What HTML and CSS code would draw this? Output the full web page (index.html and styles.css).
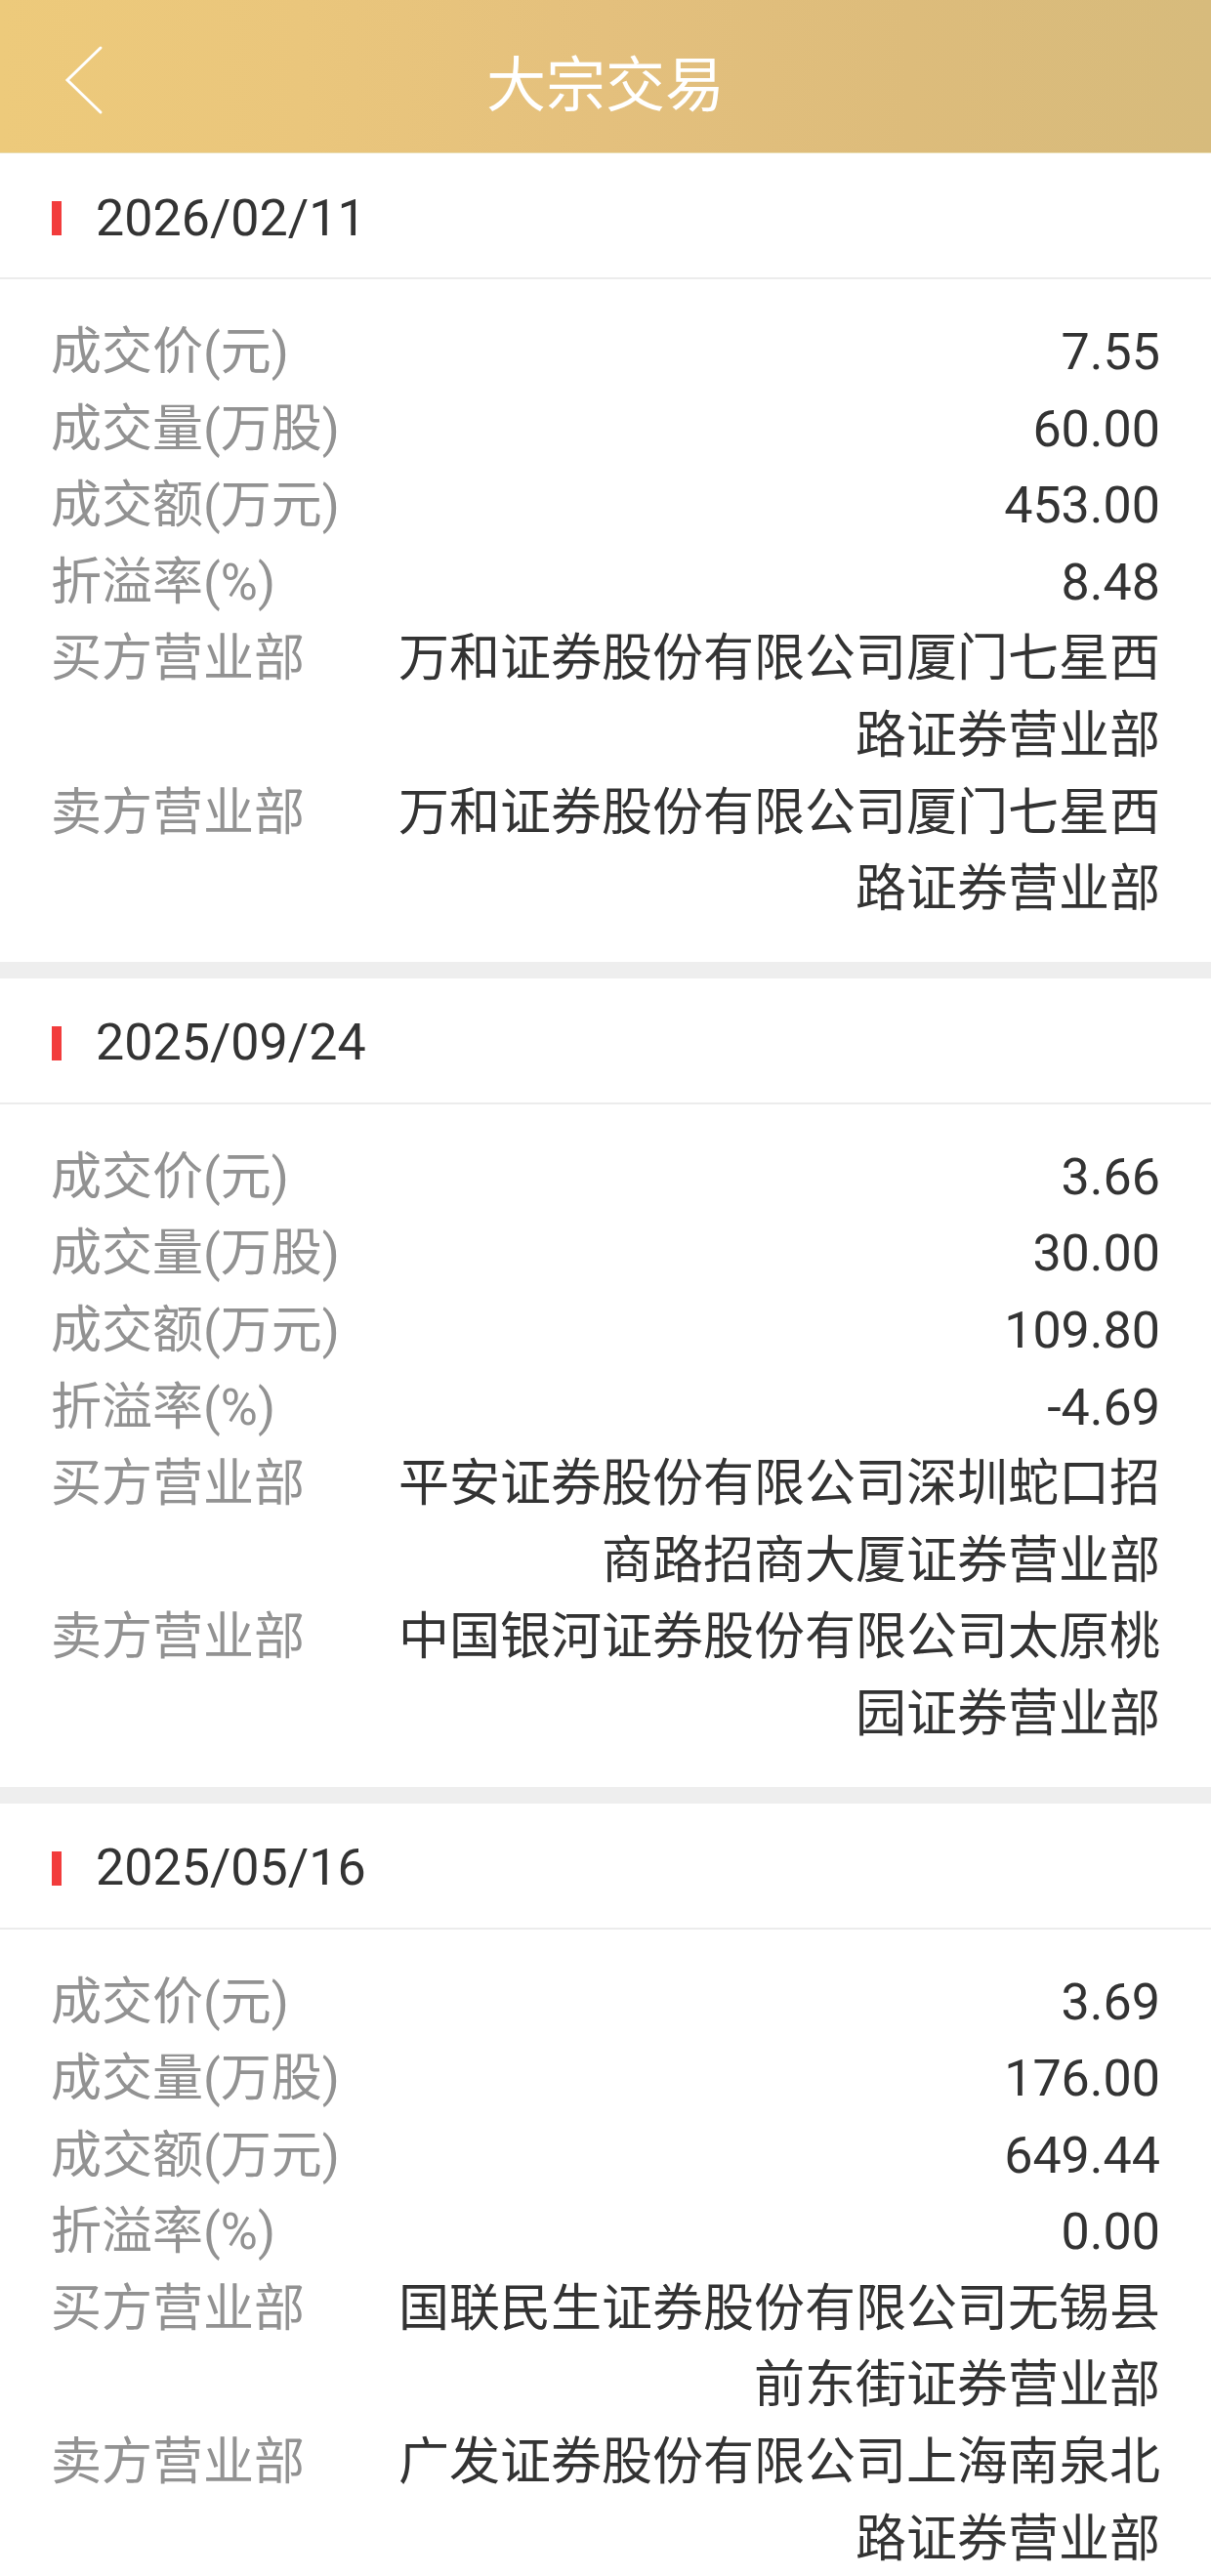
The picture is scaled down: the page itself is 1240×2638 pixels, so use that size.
FILE: index.html
```html
<!DOCTYPE html>
<html lang="zh-CN">
<head>
<meta charset="utf-8">
<title>大宗交易</title>
<link rel="stylesheet" href="styles.css">
</head>
<body>
<header class="topbar">
  <div class="back">
    <svg class="back-icon" viewBox="0 0 40 72" width="40" height="72" aria-hidden="true">
      <path d="M37 3 L3 36 L37 69" fill="none" stroke="#ffffff" stroke-width="3" stroke-linecap="round" stroke-linejoin="miter"/>
    </svg>
  </div>
  <h1 class="title">大宗交易</h1>
  <div class="spacer"></div>
</header>

<main class="list">
  <section class="trade">
    <div class="trade-date"><span class="mark"></span><span class="date-text">2026/02/11</span></div>
    <dl class="trade-body">
      <div class="row"><dt>成交价(元)</dt><dd>7.55</dd></div>
      <div class="row"><dt>成交量(万股)</dt><dd>60.00</dd></div>
      <div class="row"><dt>成交额(万元)</dt><dd>453.00</dd></div>
      <div class="row"><dt>折溢率(%)</dt><dd>8.48</dd></div>
      <div class="row"><dt>买方营业部</dt><dd>万和证券股份有限公司厦门七星西路证券营业部</dd></div>
      <div class="row"><dt>卖方营业部</dt><dd>万和证券股份有限公司厦门七星西路证券营业部</dd></div>
    </dl>
  </section>

  <section class="trade">
    <div class="trade-date"><span class="mark"></span><span class="date-text">2025/09/24</span></div>
    <dl class="trade-body">
      <div class="row"><dt>成交价(元)</dt><dd>3.66</dd></div>
      <div class="row"><dt>成交量(万股)</dt><dd>30.00</dd></div>
      <div class="row"><dt>成交额(万元)</dt><dd>109.80</dd></div>
      <div class="row"><dt>折溢率(%)</dt><dd>-4.69</dd></div>
      <div class="row"><dt>买方营业部</dt><dd>平安证券股份有限公司深圳蛇口招商路招商大厦证券营业部</dd></div>
      <div class="row"><dt>卖方营业部</dt><dd>中国银河证券股份有限公司太原桃园证券营业部</dd></div>
    </dl>
  </section>

  <section class="trade">
    <div class="trade-date"><span class="mark"></span><span class="date-text">2025/05/16</span></div>
    <dl class="trade-body">
      <div class="row"><dt>成交价(元)</dt><dd>3.69</dd></div>
      <div class="row"><dt>成交量(万股)</dt><dd>176.00</dd></div>
      <div class="row"><dt>成交额(万元)</dt><dd>649.44</dd></div>
      <div class="row"><dt>折溢率(%)</dt><dd>0.00</dd></div>
      <div class="row"><dt>买方营业部</dt><dd>国联民生证券股份有限公司无锡县前东街证券营业部</dd></div>
      <div class="row"><dt>卖方营业部</dt><dd>广发证券股份有限公司上海南泉北路证券营业部</dd></div>
    </dl>
  </section>
</main>
</body>
</html>
```

FILE: styles.css
```css
* {
  box-sizing: border-box;
}

html, body {
  margin: 0;
  padding: 0;
  background: #ffffff;
}

body {
  font-family: Roboto, "Noto Sans CJK SC", "Noto Sans", sans-serif;
  color: #333333;
}

.topbar {
  height: 157px;
  padding-top: 8px;
  display: grid;
  grid-template-columns: 1fr auto 1fr;
  align-items: center;
  background: linear-gradient(to right, #edca7b 0%, #eac67c 25%, #e4c07d 50%, #ddbc7b 75%, #d7bb7c 100%);
  border-bottom: 1px solid #e9dcae;
}

.back {
  padding-left: 66px;
  display: flex;
  align-items: center;
}

.back-icon {
  display: block;
}

.title {
  margin: 0;
  font-family: "Noto Sans CJK SC", sans-serif;
  font-weight: 400;
  font-size: 61px;
  line-height: 1;
  color: #ffffff;
}

.trade {
  border-bottom: 17px solid #eeeeee;
}

.trade-date {
  height: 129px;
  padding: 6px 0 0 53px;
  display: flex;
  align-items: center;
  border-bottom: 2px solid #ececec;
}

.mark {
  width: 10px;
  height: 35px;
  background: #f23c3c;
  margin-right: 35px;
  flex: none;
}

.date-text {
  font-size: 52px;
  line-height: 1;
  color: #333333;
}

.trade-body {
  margin: 0;
  padding: 36px 52px 34px 52px;
}

.row {
  display: grid;
  grid-template-columns: 330px 1fr;
  font-size: 52px;
  line-height: 78.6px;
}

.row dt {
  color: #929292;
  white-space: nowrap;
}

.row dd {
  margin: 0;
  text-align: right;
  color: #333333;
}
```
